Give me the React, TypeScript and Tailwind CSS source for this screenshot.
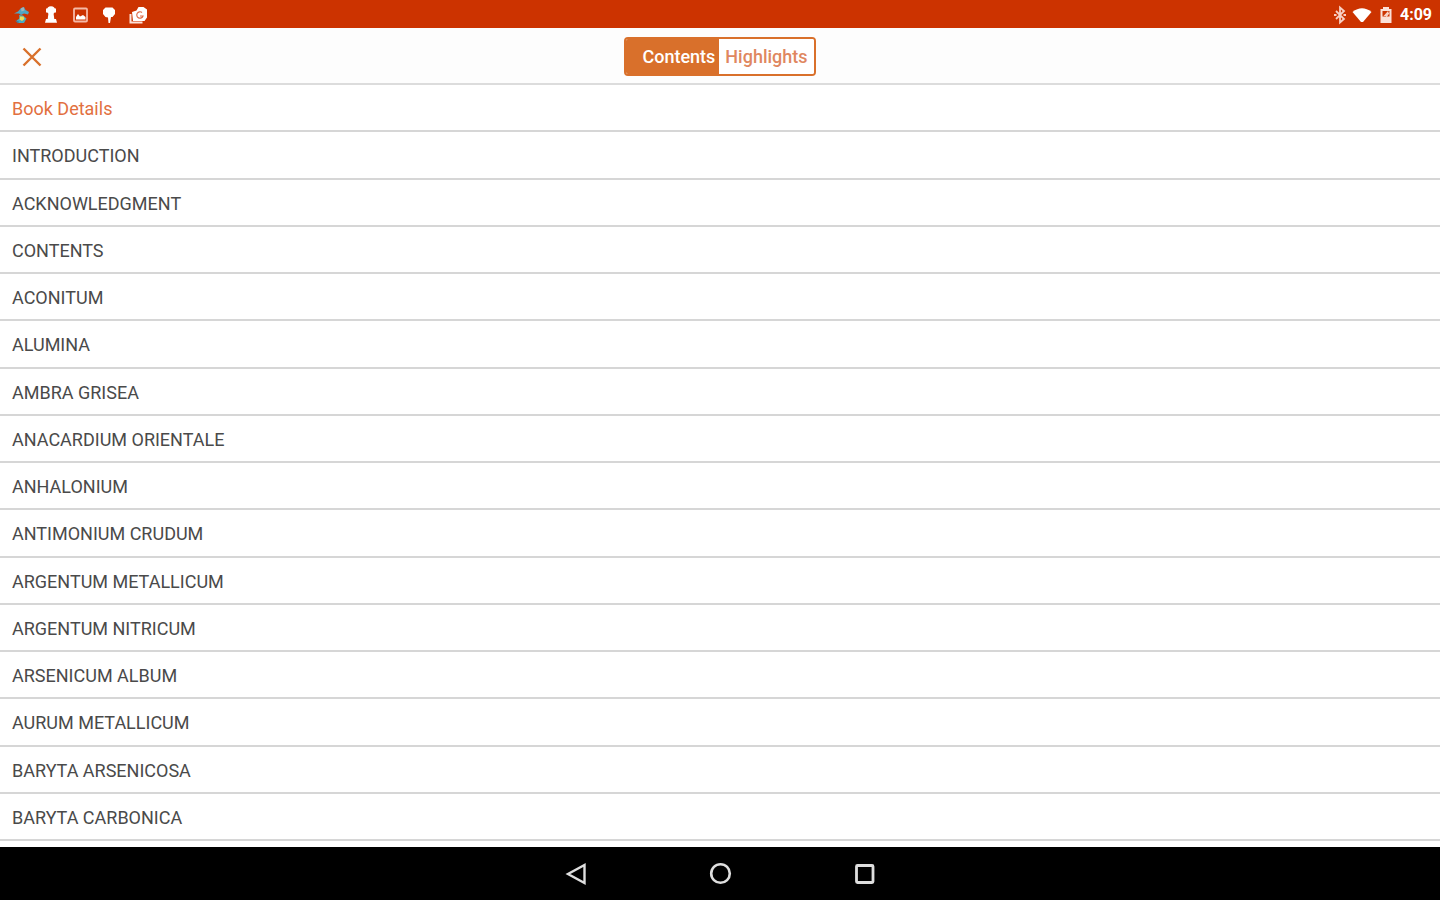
import React, { useState } from "react";

const chapters = [
  "INTRODUCTION",
  "ACKNOWLEDGMENT",
  "CONTENTS",
  "ACONITUM",
  "ALUMINA",
  "AMBRA GRISEA",
  "ANACARDIUM ORIENTALE",
  "ANHALONIUM",
  "ANTIMONIUM CRUDUM",
  "ARGENTUM METALLICUM",
  "ARGENTUM NITRICUM",
  "ARSENICUM ALBUM",
  "AURUM METALLICUM",
  "BARYTA ARSENICOSA",
  "BARYTA CARBONICA",
];

function StatusBar() {
  return (
    <div className="flex h-7 shrink-0 items-center justify-between bg-[#cc3300] pt-0.5 pr-2 pl-3 text-white">
      <div className="flex items-center gap-[9px]">
        <svg className="size-5" viewBox="0 0 20 20" aria-hidden="true">
          <path d="M2 8.500l4-2 3-3.500 3-1 1.500 3 3.500 2-1 2.500-4-1-3 1.500-2-1.500z" fill="#4fa6c4" />
          <path d="M9 3.500l2.500-1.500 1 3.500-3 1z" fill="#9fb4bb" />
          <path d="M7 10l4 .5 3.500 3-2.500 4.500H6.500l-2-2.500 3-2z" fill="#4aa9bf" />
          <path d="M8 11.500h3.500l1 2.500-2.500 2-2.500-1.500z" fill="#f0dc55" />
          <path d="M3 15.500l4 1-1 2z" fill="#477c98" />
        </svg>
        <svg className="size-5" viewBox="0 0 20 20" fill="#fff" aria-hidden="true">
          <circle cx="10" cy="5.200" r="4" />
          <path d="M5 3.500h10v4H5zM7.500 8h5l.8 6h-6.600z" />
          <path d="M5 14h10l1 3.800H4z" />
        </svg>
        <svg className="size-5" viewBox="0 0 20 20" aria-hidden="true">
          <rect x="4" y="3.500" width="13" height="13" rx="1" fill="none" stroke="#f5b9a6" strokeWidth="1.800" />
          <path d="M6 12l2-3 2 2.500 3-1.500 2.500 2v2.500H6z" fill="#fff" />
        </svg>
        <svg className="size-5" viewBox="0 0 20 20" fill="#fff" aria-hidden="true">
          <path d="M6.500 2.500h7L16 5v4l-2.500 3H12l-1 6H9.500L9 12.500 6.500 12 4 9V5z" />
        </svg>
        <svg className="size-5" viewBox="0 0 20 20" aria-hidden="true">
          <path d="M2.500 9v8.500h12" fill="none" stroke="#fde3da" strokeWidth="2" />
          <path d="M4 7l4.500-1.500L10.500 2h5L19 4.500v8L16.500 16H5z" fill="#fff" />
          <path d="M14 7.500a3.200 3.200 0 1 0 1 3.500h-3" fill="none" stroke="#dd6e4c" strokeWidth="1.200" />
        </svg>
      </div>
      <div className="flex items-center gap-1">
        <div className="flex items-center gap-0.5">
          <svg className="size-5" viewBox="0 0 20 20" fill="none" stroke="#f8d0c4" strokeWidth="1.800" aria-hidden="true">
            <path d="M6 6l8 8-4 3.500v-15L14 6l-8 8" />
            <path d="M4 10h2.500M13.500 10H16" strokeWidth="2.200" />
          </svg>
          <svg className="size-5" viewBox="0 0 20 20" fill="#fff" aria-hidden="true">
            <path d="M.5 7Q10-.5 19.500 7L11 17H9z" />
          </svg>
        </div>
        <svg className="size-5" viewBox="0 0 20 20" aria-hidden="true">
          <path d="M7 4V2h6v2h2.500v14h-11V4z" fill="#fbe0d7" />
          <path d="M6.500 6h7v5.500h-7z" fill="#cc3300" />
          <path d="M12.500 5.500l-5 5.500h2.500v2l4-5.500h-2z" fill="#f8cfc2" />
        </svg>
        <span className="text-base leading-5 font-bold">4:09</span>
      </div>
    </div>
  );
}

function TabSwitch() {
  const [tab, setTab] = useState("Contents");
  const active = "bg-[#d9702b] text-white";
  const idle = "bg-white text-[#e0875f]";

  return (
    <div className="flex h-[39px] overflow-hidden rounded-[4px] border-2 border-[#d9702b] text-lg font-medium">
      <button
        type="button"
        aria-pressed={tab === "Contents"}
        onClick={() => setTab("Contents")}
        className={`pr-1 pl-4 ${tab === "Contents" ? active : idle}`}
      >
        Contents
      </button>
      <button
        type="button"
        aria-pressed={tab === "Highlights"}
        onClick={() => setTab("Highlights")}
        className={`px-1.5 ${tab === "Highlights" ? active : idle}`}
      >
        Highlights
      </button>
    </div>
  );
}

function Header() {
  return (
    <header className="grid h-[57px] shrink-0 grid-cols-[1fr_auto_1fr] items-center border-b-2 border-[#dcdcdc] bg-[#fdfdfd] px-5 pt-0.5">
      <button type="button" aria-label="Close" className="justify-self-start">
        <svg className="size-6" viewBox="0 0 24 24" fill="none" stroke="#d9702b" strokeWidth="2.400">
          <path d="M3.500 3.500l17 17M20.500 3.500l-17 17" />
        </svg>
      </button>
      <TabSwitch />
    </header>
  );
}

function NavigationBar() {
  return (
    <nav className="flex h-[53px] shrink-0 items-center justify-center gap-30 bg-black">
      <button type="button" aria-label="Back">
        <svg className="size-6" viewBox="0 0 24 24" fill="none" stroke="#dedede" strokeWidth="2.400">
          <path d="M20.500 3v18L4 12z" />
        </svg>
      </button>
      <button type="button" aria-label="Home">
        <svg className="size-6" viewBox="0 0 24 24" fill="none" stroke="#dedede" strokeWidth="2.600">
          <circle cx="12.500" cy="11.500" r="9.300" />
        </svg>
      </button>
      <button type="button" aria-label="Recent apps">
        <svg className="size-6" viewBox="0 0 24 24" fill="none" stroke="#dedede" strokeWidth="2.800">
          <rect x="4.500" y="3.500" width="16.500" height="17" rx="1" />
        </svg>
      </button>
    </nav>
  );
}

export default function App() {
  return (
    <div className="flex h-screen flex-col bg-white font-['Roboto',sans-serif]">
      <StatusBar />
      <Header />
      <main className="flex flex-1 flex-col overflow-y-auto">
        <ul className="flex flex-1 flex-col pb-1.5 text-lg leading-6 text-[#4a4a4a]">
          <li className="flex min-h-[47px] flex-1 border-b-2 border-[#d6d6d6]">
            <a href="#details" className="flex flex-1 items-center px-3 pt-[3px] text-[#e2703f]">
              Book Details
            </a>
          </li>
          {chapters.map((chapter, idx) => (
            <li key={chapter} className="flex min-h-[47px] flex-1 border-b-2 border-[#d6d6d6]">
              <a href={`#chapter-${idx + 1}`} className="flex flex-1 items-center px-3 pt-[3px]">
                {chapter}
              </a>
            </li>
          ))}
        </ul>
      </main>
      <NavigationBar />
    </div>
  );
}
